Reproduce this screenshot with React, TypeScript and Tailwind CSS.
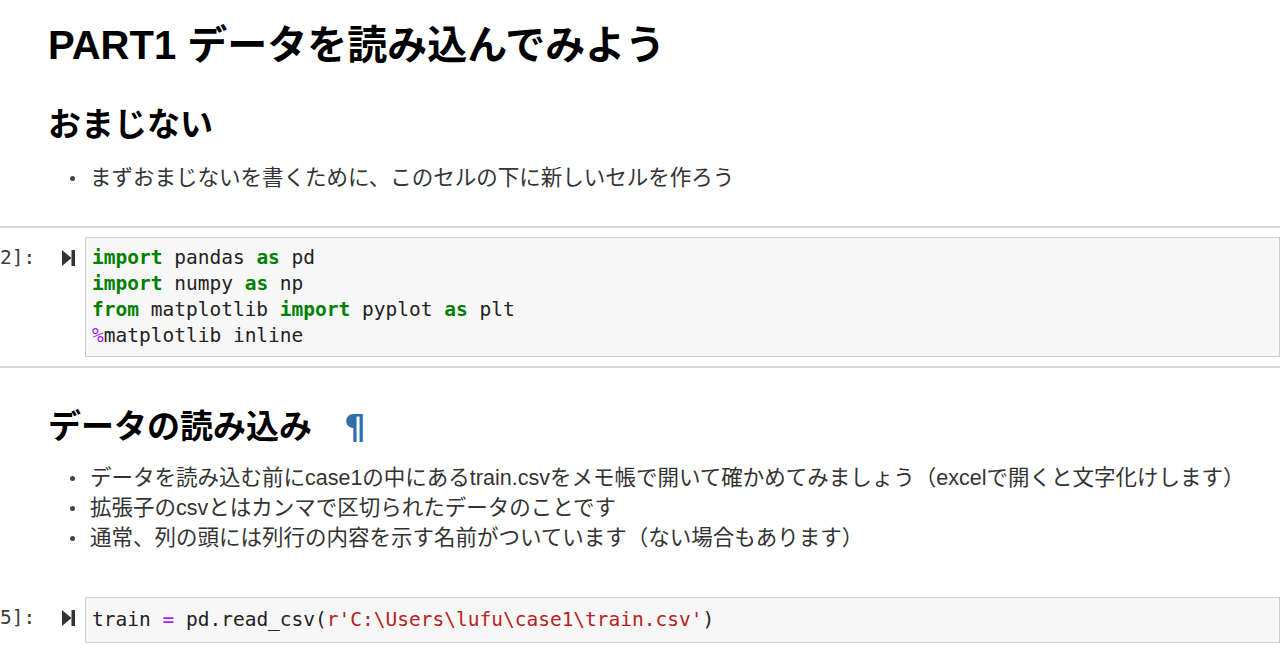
import React from "react";

const jp = "font-['Liberation_Sans','Noto_Sans_CJK_JP',sans-serif]";
const mono = "font-['DejaVu_Sans_Mono','Liberation_Mono',monospace]";

const RunIcon = () => (
    <svg width="13" height="16" viewBox="0 0 13 16" className="shrink-0">
        <polygon points="0,0 9.5,8 0,16" fill="#333" />
        <rect x="9.5" y="0" width="3.5" height="16" fill="#333" />
    </svg>
);

const K = ({children}: {children: React.ReactNode}) => (
    <span className="font-bold text-[#008000]">{children}</span>
);

const Bullet = ({children}: {children: React.ReactNode}) => (
    <li className="flex items-center h-[30px]">
        <span className="w-[5px] h-[5px] rounded-full bg-[#444] ml-[70px] mr-[15px] shrink-0"></span>
        <span>{children}</span>
    </li>
);

const CodeCell = ({
    n,
    pad,
    bordered,
    children,
}: {
    n: number;
    pad: string;
    bordered?: boolean;
    children: React.ReactNode;
}) => (
    <div className={bordered ? "border-y-2 border-[#d8d8d8] py-[9px]" : ""}>
        <div className={`flex items-start ${mono} text-[19.5px] leading-[26px]`}>
            {/* prompt, the left part is off the page */}
            <div className="w-[36px] h-[26px] mt-[8px] whitespace-nowrap text-[#3c3c3c]">
                {n}]:
            </div>
            <div className="w-[26px] h-[26px] mt-[8px]"></div>
            <div className="h-[26px] mt-[8px] flex items-center">
                <RunIcon />
            </div>
            <div className={`ml-[10px] flex-1 border border-[#cfcfcf] bg-[#f7f7f7] pl-[6px] ${pad} text-[#222] whitespace-pre`}>
                {children}
            </div>
        </div>
    </div>
);

export default function App() {
    return (
        <div className={`w-[1280px] h-[670px] overflow-hidden bg-white ${jp}`}>
            <div className="pt-[21px]">
                <h1 className="pl-[48px] text-[40px] leading-[48px] font-bold text-black">
                    PART1 データを読み込んでみよう
                </h1>
                <h2 className="pl-[48px] mt-[36px] text-[33px] leading-[40px] font-bold text-black">
                    おまじない
                </h2>
                <ul className="mt-[18px] text-[21.5px] text-[#333]">
                    <Bullet>まずおまじないを書くために、このセルの下に新しいセルを作ろう</Bullet>
                </ul>

                <div className="mt-[33px]">
                    <CodeCell n={2} pad="py-[7px]" bordered>
                        <div><K>import</K> pandas <K>as</K> pd</div>
                        <div><K>import</K> numpy <K>as</K> np</div>
                        <div><K>from</K> matplotlib <K>import</K> pyplot <K>as</K> plt</div>
                        <div><span className="text-[#aa22ff]">%</span>matplotlib inline</div>
                    </CodeCell>
                </div>

                <h2 className="pl-[48px] mt-[39px] text-[33px] leading-[40px] font-bold text-black flex items-center">
                    <span>データの読み込み</span>
                    <span className="ml-[32px] text-[#2d6eab] font-['DejaVu_Sans',sans-serif] font-bold text-[34px]">¶</span>
                </h2>
                <ul className="mt-[16px] text-[21.5px] text-[#333]">
                    <Bullet>データを読み込む前にcase1の中にあるtrain.csvをメモ帳で開いて確かめてみましょう（excelで開くと文字化けします）</Bullet>
                    <Bullet>拡張子のcsvとはカンマで区切られたデータのことです</Bullet>
                    <Bullet>通常、列の頭には列行の内容を示す名前がついています（ない場合もあります）</Bullet>
                </ul>

                <div className="mt-[44px]">
                    <CodeCell n={5} pad="py-[9px]">
                        <div>
                            train <span className="text-[#aa22ff]">=</span> pd.read_csv(
                            <span className="text-[#ba2121]">r'C:\Users\lufu\case1\train.csv'</span>)
                        </div>
                    </CodeCell>
                </div>
            </div>
        </div>
    );
}
